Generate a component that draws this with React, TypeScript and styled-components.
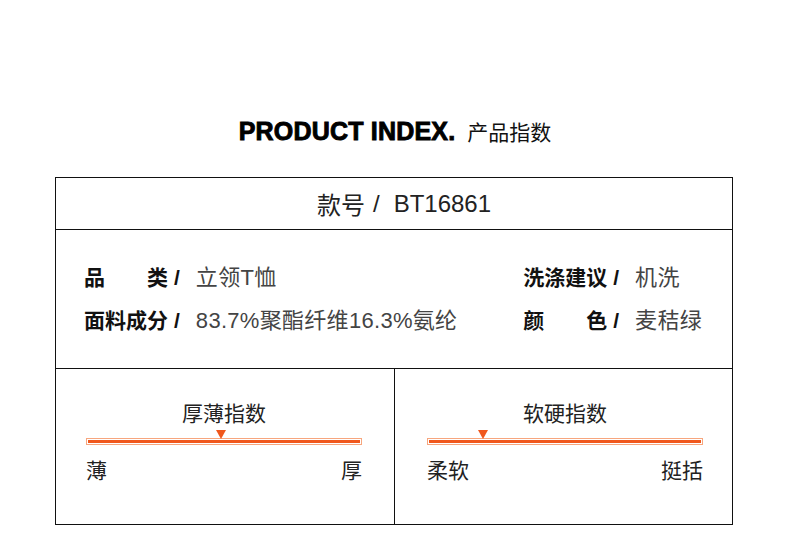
import React from "react";
import styled, { createGlobalStyle } from "styled-components";

const GlobalStyle = createGlobalStyle`
  html, body { margin: 0; padding: 0; background: #ffffff; }
  body {
    font-family: "Liberation Sans", "Noto Sans CJK SC", sans-serif;
    color: #111111;
  }
`;

const Page = styled.div`
  width: 790px;
  padding-top: 116px;
  padding-bottom: 10px;
`;

const Heading = styled.div`
  display: flex;
  justify-content: center;
  align-items: baseline;
  gap: 12px;
  height: 30px;
`;

const EnTitle = styled.span`
  font-family: "Liberation Sans", Arial, sans-serif;
  font-weight: 700;
  font-size: 25px;
  letter-spacing: 0.2px;
  -webkit-text-stroke: 0.9px #000;
  color: #000;
`;

const CnTitle = styled.span`
  font-family: "Noto Sans CJK SC", sans-serif;
  font-size: 21px;
  color: #111;
`;

const Table = styled.div`
  box-sizing: border-box;
  width: 678px;
  margin: 31px 0 0 55px;
  border: 1px solid #111;
`;

const StyleRow = styled.div`
  box-sizing: border-box;
  height: 52px;
  display: flex;
  align-items: center;
  justify-content: center;
  border-bottom: 1px solid #111;
  font-size: 24px;
  color: #222;
  padding-left: 20px;
`;

const StyleSlash = styled.span`
  margin: 0 14px 0 8px;
`;

const SpecRow = styled.div`
  box-sizing: border-box;
  height: 139px;
  display: flex;
  align-items: center;
  justify-content: space-between;
  padding: 0 30px 0 28px;
  border-bottom: 1px solid #111;
`;

const SpecColumn = styled.div`
  display: grid;
  row-gap: 13px;
`;

const SpecLine = styled.div`
  display: flex;
  align-items: baseline;
  line-height: 30px;
`;

const Label = styled.span`
  display: inline-flex;
  justify-content: space-between;
  width: 84px;
  font-size: 21px;
  font-weight: 700;
  color: #111;
`;

const Sep = styled.span`
  font-size: 21px;
  font-weight: 700;
  color: #111;
  margin: 0 16px 0 6px;
`;

const Value = styled.span`
  font-size: 22px;
  letter-spacing: 0.3px;
  color: #444;
`;

const IndexRow = styled.div`
  display: grid;
  grid-template-columns: 339px 1fr;
  height: 155px;
`;

const IndexCell = styled.div<{ $inset: number; $divider?: boolean }>`
  box-sizing: border-box;
  padding: 31px 0 0 ${(p) => p.$inset}px;
  border-right: ${(p) => (p.$divider ? "1px solid #111" : "none")};
`;

const IndexBody = styled.div`
  width: 276px;
  display: flex;
  flex-direction: column;
`;

const IndexTitle = styled.div`
  text-align: center;
  font-size: 21px;
  line-height: 28px;
  color: #222;
`;

const Track = styled.div`
  position: relative;
  box-sizing: border-box;
  height: 7px;
  margin-top: 10px;
  border: 1px solid #f7a67e;
  padding: 1px;
  background: #fff;
`;

const Fill = styled.div`
  height: 3px;
  background: #f0571c;
`;

const Marker = styled.div`
  position: absolute;
  bottom: 100%;
  width: 0;
  height: 0;
  transform: translateX(-50%);
  border-left: 5px solid transparent;
  border-right: 5px solid transparent;
  border-top: 9px solid #f0571c;
`;

const Ends = styled.div`
  display: flex;
  justify-content: space-between;
  margin-top: 12px;
  font-size: 21px;
  line-height: 28px;
  color: #222;
`;

const Spec = ({ label, value }: { label: string; value: string }) => (
  <SpecLine>
    <Label>
      {[...label].map((c, i) => (
        <span key={i}>{c}</span>
      ))}
    </Label>
    <Sep>/</Sep>
    <Value>{value}</Value>
  </SpecLine>
);

const IndexScale = ({
  title,
  left,
  right,
  pos,
  inset,
  divider,
}: {
  title: string;
  left: string;
  right: string;
  pos: number;
  inset: number;
  divider?: boolean;
}) => (
  <IndexCell $inset={inset} $divider={divider}>
    <IndexBody>
      <IndexTitle>{title}</IndexTitle>
      <Track>
        <Fill />
        <Marker style={{ left: `${pos}%` }} />
      </Track>
      <Ends>
        <span>{left}</span>
        <span>{right}</span>
      </Ends>
    </IndexBody>
  </IndexCell>
);

export default function App() {
  return (
    <>
      <GlobalStyle />
      <Page>
        <Heading>
          <EnTitle>PRODUCT INDEX.</EnTitle>
          <CnTitle>产品指数</CnTitle>
        </Heading>
        <Table>
          <StyleRow>
            款号<StyleSlash>/</StyleSlash>BT16861
          </StyleRow>
          <SpecRow>
            <SpecColumn>
              <Spec label="品类" value="立领T恤" />
              <Spec label="面料成分" value="83.7%聚酯纤维16.3%氨纶" />
            </SpecColumn>
            <SpecColumn>
              <Spec label="洗涤建议" value="机洗" />
              <Spec label="颜色" value="麦秸绿" />
            </SpecColumn>
          </SpecRow>
          <IndexRow>
            <IndexScale title="厚薄指数" left="薄" right="厚" pos={49} inset={30} divider />
            <IndexScale title="软硬指数" left="柔软" right="挺括" pos={20} inset={32} />
          </IndexRow>
        </Table>
      </Page>
    </>
  );
}
